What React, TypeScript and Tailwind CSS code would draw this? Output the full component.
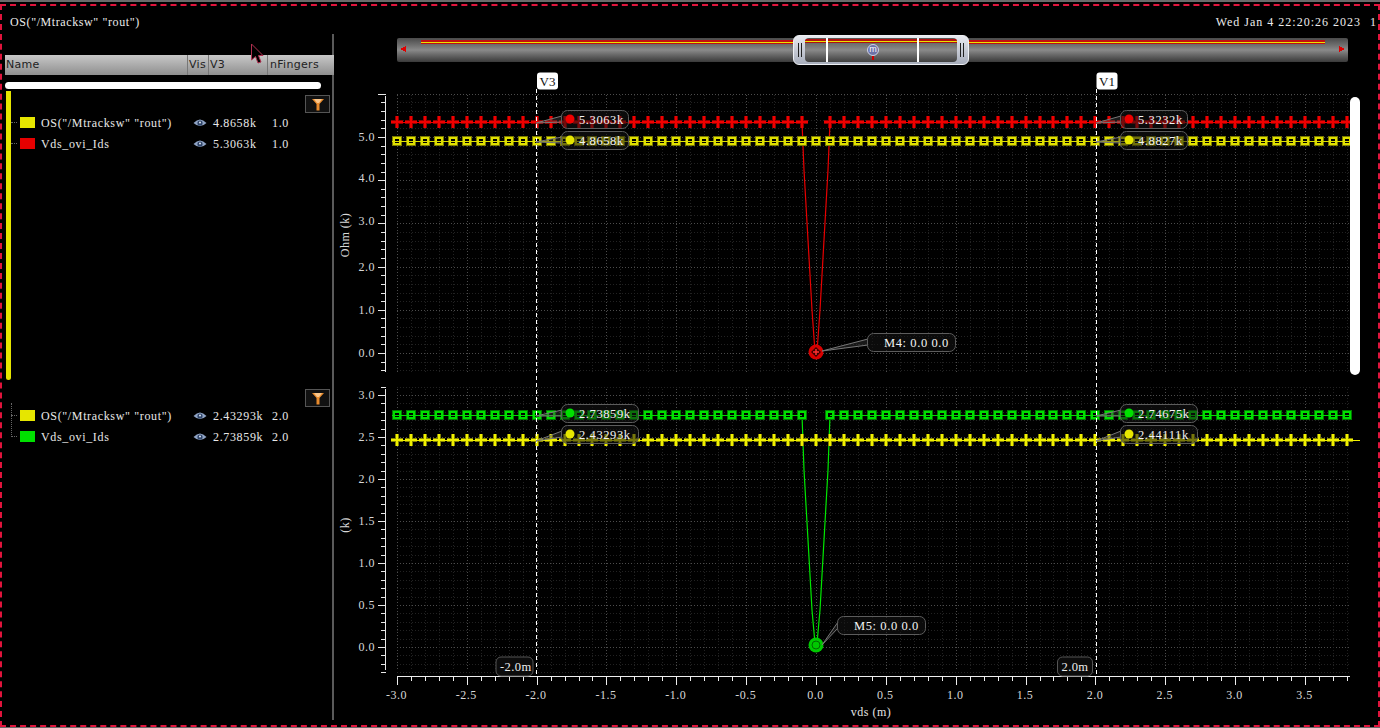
import React from "react";

const sx = (v: number) => 816 + v * 139.7;
const range = (a: number, b: number) => Array.from({ length: b - a + 1 }, (_, i) => a + i);
const serif = "'Liberation Serif', serif";

function Eye() {
  return (
    <svg width="14" height="10" viewBox="0 0 14 10" className="shrink-0">
      <path d="M0.5 5 Q7 -2 13.5 5 Q7 11 0.5 5Z" fill="#8fa3c4" />
      <circle cx="7" cy="5" r="2.6" fill="#2f4468" />
      <circle cx="7" cy="4.6" r="1" fill="#dfe6f2" />
    </svg>
  );
}

function Filter() {
  return (
    <div className="w-[25px] h-[18px] border border-[#555] bg-[#111] flex items-center justify-center">
      <svg width="14" height="13" viewBox="0 0 14 13">
        <path d="M1 1H13L8.5 6V12.5H5.5V6Z" fill="#e88a2c" />
        <path d="M3 1H11L8 5H6Z" fill="#f9c58a" />
      </svg>
    </div>
  );
}

function Row({ color, name, val, nf }: { color: string; name: string; val: string; nf: string }) {
  return (
    <div className="flex items-center h-[21px] text-[12px] tracking-[0.65px] text-[#e8e8e8] whitespace-nowrap" style={{ fontFamily: serif }}>
      <span className="w-[6px] border-t border-dotted border-[#666] ml-[6px] mr-[3px] shrink-0" />
      <span className="w-[15px] h-[11px] shrink-0" style={{ background: color }} />
      <span className="w-[158px] pl-[6px] shrink-0">{name}</span>
      <Eye />
      <span className="w-[65px] pl-[6px] shrink-0">{val}</span>
      <span>{nf}</span>
    </div>
  );
}

function PlusLine({ y, color, dim, skip }: { y: number; color: string; dim: string; skip?: boolean }) {
  const xs = range(-30, 38).filter((i) => !(skip && i === 0)).map((i) => Math.round(sx(i / 10)));
  return (
    <g shapeRendering="crispEdges">
      {xs.map((x) => (
        <path key={"d" + x} d={`M${x - 6} ${y}H${x + 6}M${x} ${y - 6}V${y + 6}`} stroke={dim} strokeWidth="4" />
      ))}
      {xs.map((x) => (
        <path key={x} d={`M${x - 6} ${y}H${x + 6}M${x} ${y - 6}V${y + 6}`} stroke={color} strokeWidth="2" />
      ))}
      {skip ? (
        <>
          <line x1={392} x2={802} y1={y} y2={y} stroke={color} />
          <line x1={830} x2={1350} y1={y} y2={y} stroke={color} />
        </>
      ) : (
        <line x1={392} x2={1360} y1={y} y2={y} stroke={color} />
      )}
    </g>
  );
}

function SquareLine({ y, color, dim, skip }: { y: number; color: string; dim: string; skip?: boolean }) {
  const xs = range(-30, 38).filter((i) => !(skip && i === 0)).map((i) => Math.round(sx(i / 10)));
  return (
    <g shapeRendering="crispEdges">
      {xs.map((x) => (
        <g key={x}>
          <rect x={x - 5} y={y - 5} width={10} height={10} fill={dim} />
          <rect x={x - 4} y={y - 4} width={8} height={8} fill={color} />
          <rect x={x - 2} y={y - 2} width={4} height={4} fill="#000" />
        </g>
      ))}
      {skip ? (
        <>
          <line x1={392} x2={802} y1={y} y2={y} stroke={color} />
          <line x1={830} x2={1350} y1={y} y2={y} stroke={color} />
        </>
      ) : (
        <line x1={392} x2={1350} y1={y} y2={y} stroke={color} />
      )}
    </g>
  );
}

function Grid({ top, bottom, y0, per, major, minor }: { top: number; bottom: number; y0: number; per: number; major: number; minor: number }) {
  const count = Math.round((y0 - top) / (per * minor));
  const below = Math.round((bottom - y0) / (per * minor));
  const h = range(-below, count).map((i) => {
    const y = Math.round(y0 - i * minor * per) + 0.5;
    const isMajor = i % Math.round(major / minor) === 0;
    return <line key={"h" + i} x1={397} x2={1350} y1={y} y2={y} stroke={isMajor ? "#4c4c4c" : "#222"} strokeDasharray="1 2" />;
  });
  const v = range(-30, 38).map((i) => {
    const x = Math.round(sx(i / 10)) + 0.5;
    return <line key={"v" + i} x1={x} x2={x} y1={top} y2={bottom} stroke={i % 5 === 0 ? "#4c4c4c" : "#222"} strokeDasharray="1 2" />;
  });
  return <g shapeRendering="crispEdges">{h}{v}</g>;
}

function YAxis({ top, bottom, y0, per, step }: { top: number; bottom: number; y0: number; per: number; step: number }) {
  const n = Math.round((y0 - top) / (per * step));
  const m = Math.round((bottom - y0) / (per * step));
  return (
    <g shapeRendering="crispEdges" stroke="#e8e8e8">
      <line x1={385.5} x2={385.5} y1={top} y2={bottom} />
      {range(-m, n).map((i) => {
        const y = Math.round(y0 - i * step * per) + 0.5;
        const big = i % 5 === 0;
        return <line key={i} x1={big ? 378 : 381} x2={386} y1={y} y2={y} />;
      })}
    </g>
  );
}

function Callout({ x, y, w, h = 18, text, dot, tip, textX }: { x: number; y: number; w: number; h?: number; text: string; dot?: string; tip: [number, number]; textX?: number }) {
  return (
    <g>
      <path d={`M${x + 1} ${y + 6}L${tip[0]} ${tip[1]}L${x + 1} ${y + h - 6}`} fill="rgba(60,60,60,0.4)" stroke="#777" />
      <rect x={x + 0.5} y={y + 0.5} width={w} height={h} rx="6" fill="rgba(20,20,20,0.55)" stroke="#5c5c5c" />
      {dot && <circle cx={x + 9} cy={y + 9} r="4.5" fill={dot} />}
      <text x={textX ?? x + 18} y={y + 13.5} fontSize="12.5" letterSpacing="0.6" fill="#f4f4f4" fontFamily={serif}>{text}</text>
    </g>
  );
}

function Cursor({ x, label, name, tw }: { x: number; label: string; name: string; tw: number }) {
  return (
    <g>
      <line x1={x} x2={x} y1={89} y2={676} stroke="#fff" strokeDasharray="4 3" shapeRendering="crispEdges" />
      <rect x={x + 0.5} y={72.5} width={21} height={17} rx="3" fill="#fff" />
      <text x={x + 3} y={85.5} fontSize="13" fill="#111" fontFamily={serif}>{name}</text>
      <rect x={x - tw - 3.5} y={657} width={tw} height={19} rx="5" fill="#0c0c0c" stroke="#555" />
      <text x={x - tw + 0.5} y={671} fontSize="12.5" letterSpacing="0.4" fill="#eee" fontFamily={serif}>{label}</text>
    </g>
  );
}

function Plot() {
  const xTicks = range(-30, 38);
  return (
    <svg viewBox="334 70 1044 650" width="1044" height="650" className="block">
      <defs>
        <clipPath id="topclip"><rect x="390" y="90" width="960" height="70" /></clipPath>
      </defs>
      <Grid top={95} bottom={372} y0={353} per={43.2} major={1} minor={0.2} />
      <Grid top={389} bottom={670} y0={647} per={84} major={0.5} minor={0.1} />

      <YAxis top={96} bottom={372} y0={353} per={43.2} step={0.2} />
      <YAxis top={389} bottom={670} y0={647} per={84} step={0.1} />

      <g fontSize="12" letterSpacing="0.5" fill="#d8d8d8" fontFamily={serif} textAnchor="end">
        {([["5.0", 137], ["4.0", 178], ["3.0", 221], ["2.0", 267], ["1.0", 310], ["0.0", 353], ["3.0", 395], ["2.5", 437], ["2.0", 479], ["1.5", 521], ["1.0", 563], ["0.5", 605], ["0.0", 647]] as [string, number][]).map(([t, y], i) => (
          <text key={i} x={375} y={y + 4}>{t}</text>
        ))}
      </g>
      <text transform="translate(349 235) rotate(-90)" textAnchor="middle" fontSize="12" letterSpacing="0.5" fill="#d8d8d8" fontFamily={serif}>Ohm (k)</text>
      <text transform="translate(349 525) rotate(-90)" textAnchor="middle" fontSize="12" letterSpacing="0.5" fill="#d8d8d8" fontFamily={serif}>(k)</text>

      <g shapeRendering="crispEdges" stroke="#eee">
        <line x1={397} x2={1350} y1={676.5} y2={676.5} />
        {xTicks.map((i) => {
          const x = Math.round(sx(i / 10)) + 0.5;
          return <line key={i} x1={x} x2={x} y1={676} y2={i % 5 === 0 ? 685 : 681} />;
        })}
      </g>
      <g fontSize="12" letterSpacing="0.5" fill="#d8d8d8" fontFamily={serif} textAnchor="middle">
        {range(-6, 7).map((i) => (
          <text key={i} x={sx(i / 2) - 0.5} y={699}>{(i / 2).toFixed(1)}</text>
        ))}
      </g>
      <text x={871} y={716} textAnchor="middle" fontSize="12" letterSpacing="0.5" fill="#e4e4e4" fontFamily={serif}>vds (m)</text>

      {/* top traces */}
      <path d="M802 122L804 170L808 240L812 310L814.5 345M830 122L828 170L824 240L820 310L817.5 345" fill="none" stroke="#e80000" strokeWidth="1.2" />
      <g clipPath="url(#topclip)">
        <PlusLine y={122} color="#f00000" dim="#900000" skip />
        <SquareLine y={141} color="#e0e000" dim="#7c7c00" />
      </g>
      <circle cx={816} cy={352} r="7.5" fill="#d80000" />
      <path d="M816 347L821 352L816 357L811 352Z" fill="#3a0000" />
      <path d="M816 349V355M813 352H819" stroke="#ff3030" strokeWidth="1.5" />

      {/* bottom traces */}
      <path d="M802 415L804 470L808 540L812 610L814.5 638M830 415L828 470L824 540L820 610L817.5 638" fill="none" stroke="#00e800" strokeWidth="1.2" />
      <SquareLine y={415} color="#00e000" dim="#007c00" skip />
      <PlusLine y={440} color="#f0f000" dim="#868600" />
      <circle cx={816} cy={645} r="7.5" fill="#00c800" />
      <circle cx={816} cy={645} r="4" fill="none" stroke="#006a00" />

      <Cursor x={536.5} label="-2.0m" name="V3" tw={37} />
      <Cursor x={1096} label="2.0m" name="V1" tw={35} />

      <Callout x={561} y={110} w={67} text="5.3063k" dot="#f00000" tip={[536, 123]} />
      <Callout x={561} y={131} w={67} text="4.8658k" dot="#e6e600" tip={[536, 142]} />
      <Callout x={1120} y={110} w={67} text="5.3232k" dot="#f00000" tip={[1096, 123]} />
      <Callout x={1120} y={131} w={67} text="4.8827k" dot="#e6e600" tip={[1096, 142]} />
      <Callout x={561} y={404} w={77} text="2.73859k" dot="#00e000" tip={[536, 416]} />
      <Callout x={561} y={425} w={77} text="2.43293k" dot="#e6e600" tip={[536, 441]} />
      <Callout x={1120} y={404} w={77} text="2.74675k" dot="#00e000" tip={[1096, 416]} />
      <Callout x={1120} y={425} w={77} text="2.44111k" dot="#e6e600" tip={[1096, 441]} />
      <Callout x={867} y={333} w={88} text="M4:  0.0 0.0" tip={[822, 351]} textX={884} />
      <Callout x={837} y={616} w={88} text="M5:  0.0 0.0" tip={[822, 645]} textX={854} />
    </svg>
  );
}

function Overview() {
  return (
    <div className="relative w-[951px] h-[24px] ml-[63px] mt-[4px] bg-gradient-to-b from-[#4a4a4a] via-[#8a8a8a] to-[#3a3a3a] rounded-[2px]">
      <svg width="951" height="24" viewBox="0 0 951 24" className="block" shapeRendering="crispEdges">
        <rect x="24" y="2" width="904" height="4" fill="#c01010" />
        <rect x="24" y="4" width="904" height="1" fill="#e6e600" />
        <path d="M3 11L9 8V14Z" fill="#e00000" />
        <path d="M948 11L942 8V14Z" fill="#e00000" />
      </svg>
      <div className="absolute left-[396px] top-[-3px] w-[176px] h-[30px] rounded-[6px] border-[1px] border-[#eef0f4] bg-gradient-to-b from-[#e8eaf0] to-[#a8aebc] flex items-center justify-between px-[4px]">
        <span className="w-[4px] h-[14px] border-x border-[#222]" />
        <div className="relative w-[152px] h-[24px] rounded-[4px] bg-gradient-to-b from-[#555] via-[#8a8a8a] to-[#404040] overflow-hidden">
          <div className="h-[4px] mt-[1px] bg-[#b01010] flex items-center"><div className="h-[1px] w-full bg-[#e6e600]" /></div>
          <div className="absolute left-[21px] top-0 h-full w-[2px] bg-white" />
          <div className="absolute left-[112px] top-0 h-full w-[2px] bg-white" />
          <div className="absolute left-[62px] top-[6px] w-[12px] h-[12px] rounded-full bg-[#6c72a8] border border-[#cfd3e6] text-[9px] leading-[9px] text-white text-center" style={{ fontFamily: "'Liberation Sans', sans-serif" }}>m</div>
          <div className="absolute left-[67px] top-[18px] w-[2px] h-[4px] bg-[#d00000]" />
        </div>
        <span className="w-[4px] h-[14px] border-x border-[#222]" />
      </div>
    </div>
  );
}

export default function App() {
  return (
    <div className="relative w-[1380px] h-[728px] bg-black overflow-hidden border-t-2 border-b border-[#6a6a6a]">
      <div className="h-[723px] mt-[2px] border-2 border-dashed border-[#e0143c] flex flex-col">
        <div className="flex justify-between h-[28px] pt-[9px] text-[12px] leading-[14px] tracking-[0.6px] text-[#ececec] whitespace-nowrap" style={{ fontFamily: serif }}>
          <span className="pl-[8px]">OS("/Mtracksw" "rout")</span>
          <span className="flex gap-[9px] mr-[1px] tracking-[1px]"><span>Wed Jan 4 22:20:26 2023</span><span>1</span></span>
        </div>
        <div className="flex flex-1 min-h-0">
          <div className="w-[332px] h-[686px] border-r-2 border-[#5a5a5a] pl-[3px] shrink-0">
            <div className="flex h-[20px] -mr-[2px] mt-[21px] items-center bg-gradient-to-b from-[#c8c8c8] to-[#8f8f8f] text-[11px] text-[#222] tracking-[0.3px]" style={{ fontFamily: "'DejaVu Sans', sans-serif" }}>
              <span className="w-[183px] pl-[1px] border-r border-[#777] h-full leading-[20px]">Name</span>
              <span className="w-[21px] pl-[1px] border-r border-[#777] h-full leading-[20px]">Vis</span>
              <span className="w-[59px] pl-[1px] border-r border-[#777] h-full leading-[20px]">V3</span>
              <span className="pl-[2px]">nFingers</span>
            </div>
            <div className="w-[316px] h-[7px] mt-[7px] rounded-full bg-white" />
            <div className="flex h-[289px] mt-[2px]">
              <div className="w-[5px] ml-[1px] h-full bg-[#e6e600] rounded-b-full shrink-0" />
              <div className="flex-1 pt-[4px]">
                <div className="flex justify-end pr-[2px] h-[18px]"><Filter /></div>
                <div className="-mt-[1px] -ml-[6px]">
                  <Row color="#e6e600" name={'OS("/Mtracksw" "rout")'} val="4.8658k" nf="1.0" />
                  <Row color="#e60000" name="Vds_ovi_Ids" val="5.3063k" nf="1.0" />
                </div>
              </div>
            </div>
            <div className="flex justify-end pr-[2px] h-[18px] mt-[9px]"><Filter /></div>
            <div className="relative -mt-[2px]">
              <div className="absolute left-[6px] -top-[2px] h-[34px] border-l border-dotted border-[#666]" />
              <Row color="#e6e600" name={'OS("/Mtracksw" "rout")'} val="2.43293k" nf="2.0" />
              <Row color="#00e000" name="Vds_ovi_Ids" val="2.73859k" nf="2.0" />
            </div>
          </div>
          <div className="flex-1 min-w-0">
            <Overview />
            <div className="mt-[8px]"><Plot /></div>
          </div>
        </div>
      </div>
      <svg className="absolute left-[250px] top-[41px]" width="14" height="22" viewBox="0 0 14 22">
        <path d="M1.5 1V17L5.5 13.5L8 20L11 19L8.5 12.5H13Z" fill="#000" stroke="#b03050" />
      </svg>
      <div className="absolute left-[1350px] top-[95px] w-[10px] h-[278px] rounded-full bg-white" />
    </div>
  );
}
